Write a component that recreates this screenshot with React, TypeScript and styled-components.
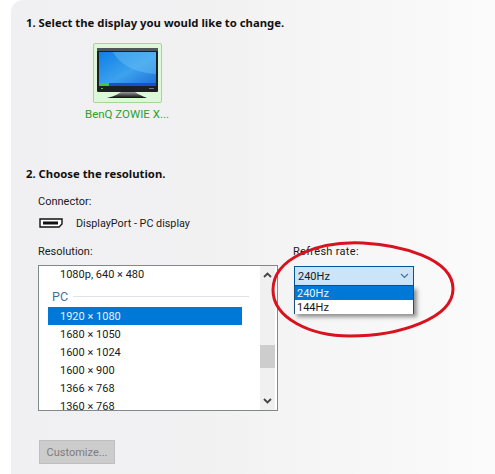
import React from 'react';
import styled, { createGlobalStyle } from 'styled-components';

const GlobalStyle = createGlobalStyle`
    html, body {
        margin: 0;
        padding: 0;
        background: #ffffff;
    }
    body {
        width: 495px;
        height: 474px;
        overflow: hidden;
        font-family: Roboto, "Open Sans", sans-serif;
        color: #1a1a1a;
    }
`;

const Panel = styled.div`
    position: relative;
    box-sizing: border-box;
    width: 484px;
    height: 474px;
    margin-left: 11px;
    padding: 15px 0 0 15px;
    background: linear-gradient(90deg, #f0f0f2 0%, #f1f1f2 39%, #f4f4f4 56%, #fbfbfb 100%);
    border-top-left-radius: 12px;
`;

const Heading = styled.div<{ $gap: number }>`
    height: 16px;
    margin-bottom: ${(props) => props.$gap}px;
    font-family: "Noto Sans", sans-serif;
    font-size: 11.3px;
    font-weight: 700;
    line-height: 16px;
    color: #111111;
`;

const DisplayTile = styled.div`
    display: flex;
    flex-direction: column;
    align-items: center;
    width: 90px;
    margin: 0 0 44px 56px;
`;

const MonitorFrame = styled.div`
    box-sizing: border-box;
    display: flex;
    align-items: center;
    justify-content: center;
    width: 69px;
    height: 60px;
    background: #dcf8d6;
    border: 1px solid #a5d597;
    border-radius: 2px;
`;

const DisplayName = styled.div`
    margin-top: 3px;
    font-size: 11.5px;
    line-height: 16px;
    color: #2aa32a;
    white-space: nowrap;
`;

const Section = styled.div`
    padding-left: 12px;
`;

const Label = styled.div<{ $wide?: boolean }>`
    height: 16px;
    font-size: 11px;
    line-height: 16px;
    color: #1a1a1a;
    letter-spacing: ${(props) => (props.$wide ? '0.3px' : 'normal')};
`;

const ConnectorRow = styled.div`
    display: flex;
    align-items: center;
    gap: 13px;
    height: 16px;
    margin: 5px 0 13px 1px;
    font-size: 10.8px;
`;

const Columns = styled.div`
    display: flex;
    gap: 15px;
`;

const ListColumn = styled.div`
    display: flex;
    flex-direction: column;
    gap: 5px;
`;

const ListBox = styled.div`
    box-sizing: border-box;
    display: flex;
    justify-content: space-between;
    width: 240px;
    height: 146px;
    background: #ffffff;
    border: 1px solid #82878a;
`;

const ListContent = styled.div`
    width: 222px;
    overflow: hidden;
    padding-left: 9px;
    box-sizing: border-box;
`;

const FirstItemOffset = styled.div`
    margin-top: -1px;
`;

const ListItem = styled.div<{ $selected?: boolean }>`
    box-sizing: border-box;
    width: 194px;
    height: 18px;
    padding-left: 12px;
    font-size: 11px;
    line-height: 20px;
    background: ${(props) => (props.$selected ? '#0078d7' : 'transparent')};
    color: ${(props) => (props.$selected ? '#e8f3fd' : '#1a1a1a')};
    white-space: nowrap;
`;

const GroupRow = styled.div`
    box-sizing: border-box;
    display: flex;
    align-items: center;
    gap: 5px;
    width: 197px;
    height: 24px;
    margin-left: 4px;
    padding-top: 2px;
    font-size: 12.5px;
    color: #3f6f9f;
`;

const GroupLine = styled.div`
    flex: 1;
    height: 1px;
    background: #dfe3e6;
`;

const ScrollBar = styled.div`
    position: relative;
    box-sizing: border-box;
    display: flex;
    flex-direction: column;
    justify-content: space-between;
    align-items: center;
    width: 15px;
    margin-right: 2px;
    padding: 6px 0;
    background: #f0f0f0;
`;

const ScrollThumb = styled.div`
    position: absolute;
    left: 0;
    top: 79px;
    width: 15px;
    height: 23px;
    background: #cdcdcd;
`;

const RateColumn = styled.div`
    position: relative;
    display: flex;
    flex-direction: column;
    gap: 6px;
`;

const Combo = styled.div`
    box-sizing: border-box;
    display: flex;
    align-items: center;
    justify-content: space-between;
    width: 120px;
    height: 20px;
    margin-left: 1px;
    padding: 0 4px 0 3px;
    background: #cce4f7;
    border: 1px solid #005499;
    font-size: 11px;
`;

const DropList = styled.div`
    position: absolute;
    left: 1px;
    top: 42px;
    box-sizing: border-box;
    width: 120px;
    height: 28px;
    background: #ffffff;
    border: 1px solid #17507e;
    border-top: none;
    box-shadow: 3px 3px 4px rgba(60, 60, 60, 0.55);
`;

const DropItem = styled.div<{ $selected?: boolean }>`
    height: 14px;
    padding-left: 2px;
    font-size: 11px;
    line-height: 16px;
    background: ${(props) => (props.$selected ? '#0078d7' : '#ffffff')};
    color: ${(props) => (props.$selected ? '#e8f3fd' : '#1a1a1a')};
`;

const CustomizeButton = styled.div`
    box-sizing: border-box;
    width: 76px;
    height: 24px;
    margin: 29px 0 0 1px;
    background: #cccccc;
    border: 1px solid #bfbfbf;
    color: #7d7d7d;
    font-size: 11px;
    line-height: 24px;
    text-align: center;
`;

const Annotation = styled.svg`
    position: absolute;
    left: 0;
    top: 0;
    pointer-events: none;
`;

const Monitor = () => (
    <svg width="61" height="52" viewBox="0 0 61 52">
        <defs>
            <linearGradient id="screen" x1="0" y1="0" x2="1" y2="1">
                <stop offset="0" stopColor="#0e7fe6" />
                <stop offset="0.55" stopColor="#3da2ee" />
                <stop offset="1" stopColor="#1c6fd8" />
            </linearGradient>
            <linearGradient id="foot" x1="0" y1="0" x2="0" y2="1">
                <stop offset="0" stopColor="#9a9a9a" />
                <stop offset="1" stopColor="#0c0c0c" />
            </linearGradient>
        </defs>
        <rect x="0" y="1" width="61" height="44" rx="1" fill="#1c2023" />
        <rect x="0" y="1" width="61" height="3" fill="#50575b" />
        <rect x="2" y="5" width="57" height="34" fill="url(#screen)" />
        <path d="M16 5 C24 20 42 26 59 27 V5 Z" fill="#6cc0f4" opacity="0.45" />
        <rect x="2" y="36" width="57" height="3" fill="#1c4fd0" />
        <rect x="2" y="36" width="10" height="3" fill="#49c23f" />
        <rect x="4" y="41" width="2" height="1" fill="#3fcf3f" />
        <rect x="52" y="41" width="5" height="1" fill="#777777" />
        <path d="M24 45 H38 L41 47 C45 49 48 50 50 51 H10 C13 50 18 49 21 47 Z" fill="url(#foot)" />
    </svg>
);

const DisplayPortIcon = () => (
    <svg width="24" height="10" viewBox="0 0 24 10">
        <path d="M1 1 H23 V6 L20 9 H1 Z" fill="#ffffff" stroke="#111111" strokeWidth="1.4" />
        <rect x="4" y="3.5" width="15" height="3" fill="#111111" />
    </svg>
);

const Chevron = ({ up, color = '#444444', weight = 1.8 }: { up?: boolean; color?: string; weight?: number }) => (
    <svg width="9" height="6" viewBox="0 0 9 6">
        <path d={up ? 'M1 5 L4.5 1.5 L8 5' : 'M1 1 L4.5 4.5 L8 1'} fill="none" stroke={color} strokeWidth={weight} />
    </svg>
);

const resolutions = ['1680 × 1050', '1600 × 1024', '1600 × 900', '1366 × 768', '1360 × 768'];

export default function App() {
    return (
        <>
            <GlobalStyle />
            <Panel>
                <Heading $gap={12}>1. Select the display you would like to change.</Heading>
                <DisplayTile>
                    <MonitorFrame>
                        <Monitor />
                    </MonitorFrame>
                    <DisplayName>BenQ ZOWIE X...</DisplayName>
                </DisplayTile>
                <Heading $gap={12}>2. Choose the resolution.</Heading>
                <Section>
                    <Label>Connector:</Label>
                    <ConnectorRow>
                        <DisplayPortIcon />
                        DisplayPort - PC display
                    </ConnectorRow>
                    <Columns>
                        <ListColumn>
                            <Label>Resolution:</Label>
                            <ListBox>
                                <ListContent>
                                    <FirstItemOffset />
                                    <ListItem>1080p, 640 × 480</ListItem>
                                    <GroupRow>
                                        PC
                                        <GroupLine />
                                    </GroupRow>
                                    <ListItem $selected>1920 × 1080</ListItem>
                                    {resolutions.map((r) => (
                                        <ListItem key={r}>{r}</ListItem>
                                    ))}
                                </ListContent>
                                <ScrollBar>
                                    <Chevron up />
                                    <ScrollThumb />
                                    <Chevron />
                                </ScrollBar>
                            </ListBox>
                        </ListColumn>
                        <RateColumn>
                            <Label $wide>Refresh rate:</Label>
                            <Combo>
                                240Hz
                                <Chevron color="#4a6f8c" weight={1.1} />
                            </Combo>
                            <DropList>
                                <DropItem $selected>240Hz</DropItem>
                                <DropItem>144Hz</DropItem>
                            </DropList>
                        </RateColumn>
                    </Columns>
                    <CustomizeButton>Customize...</CustomizeButton>
                </Section>
            </Panel>
            <Annotation width="495" height="474" viewBox="0 0 495 474">
                <path
                    d="M363 243 C400 245 453 258 453 289 C453 318 400 336 350 336 C310 336 273 318 273 290 C273 258 318 241 363 243 Z"
                    fill="none"
                    stroke="#d8121f"
                    strokeWidth="3"
                />
            </Annotation>
        </>
    );
}
